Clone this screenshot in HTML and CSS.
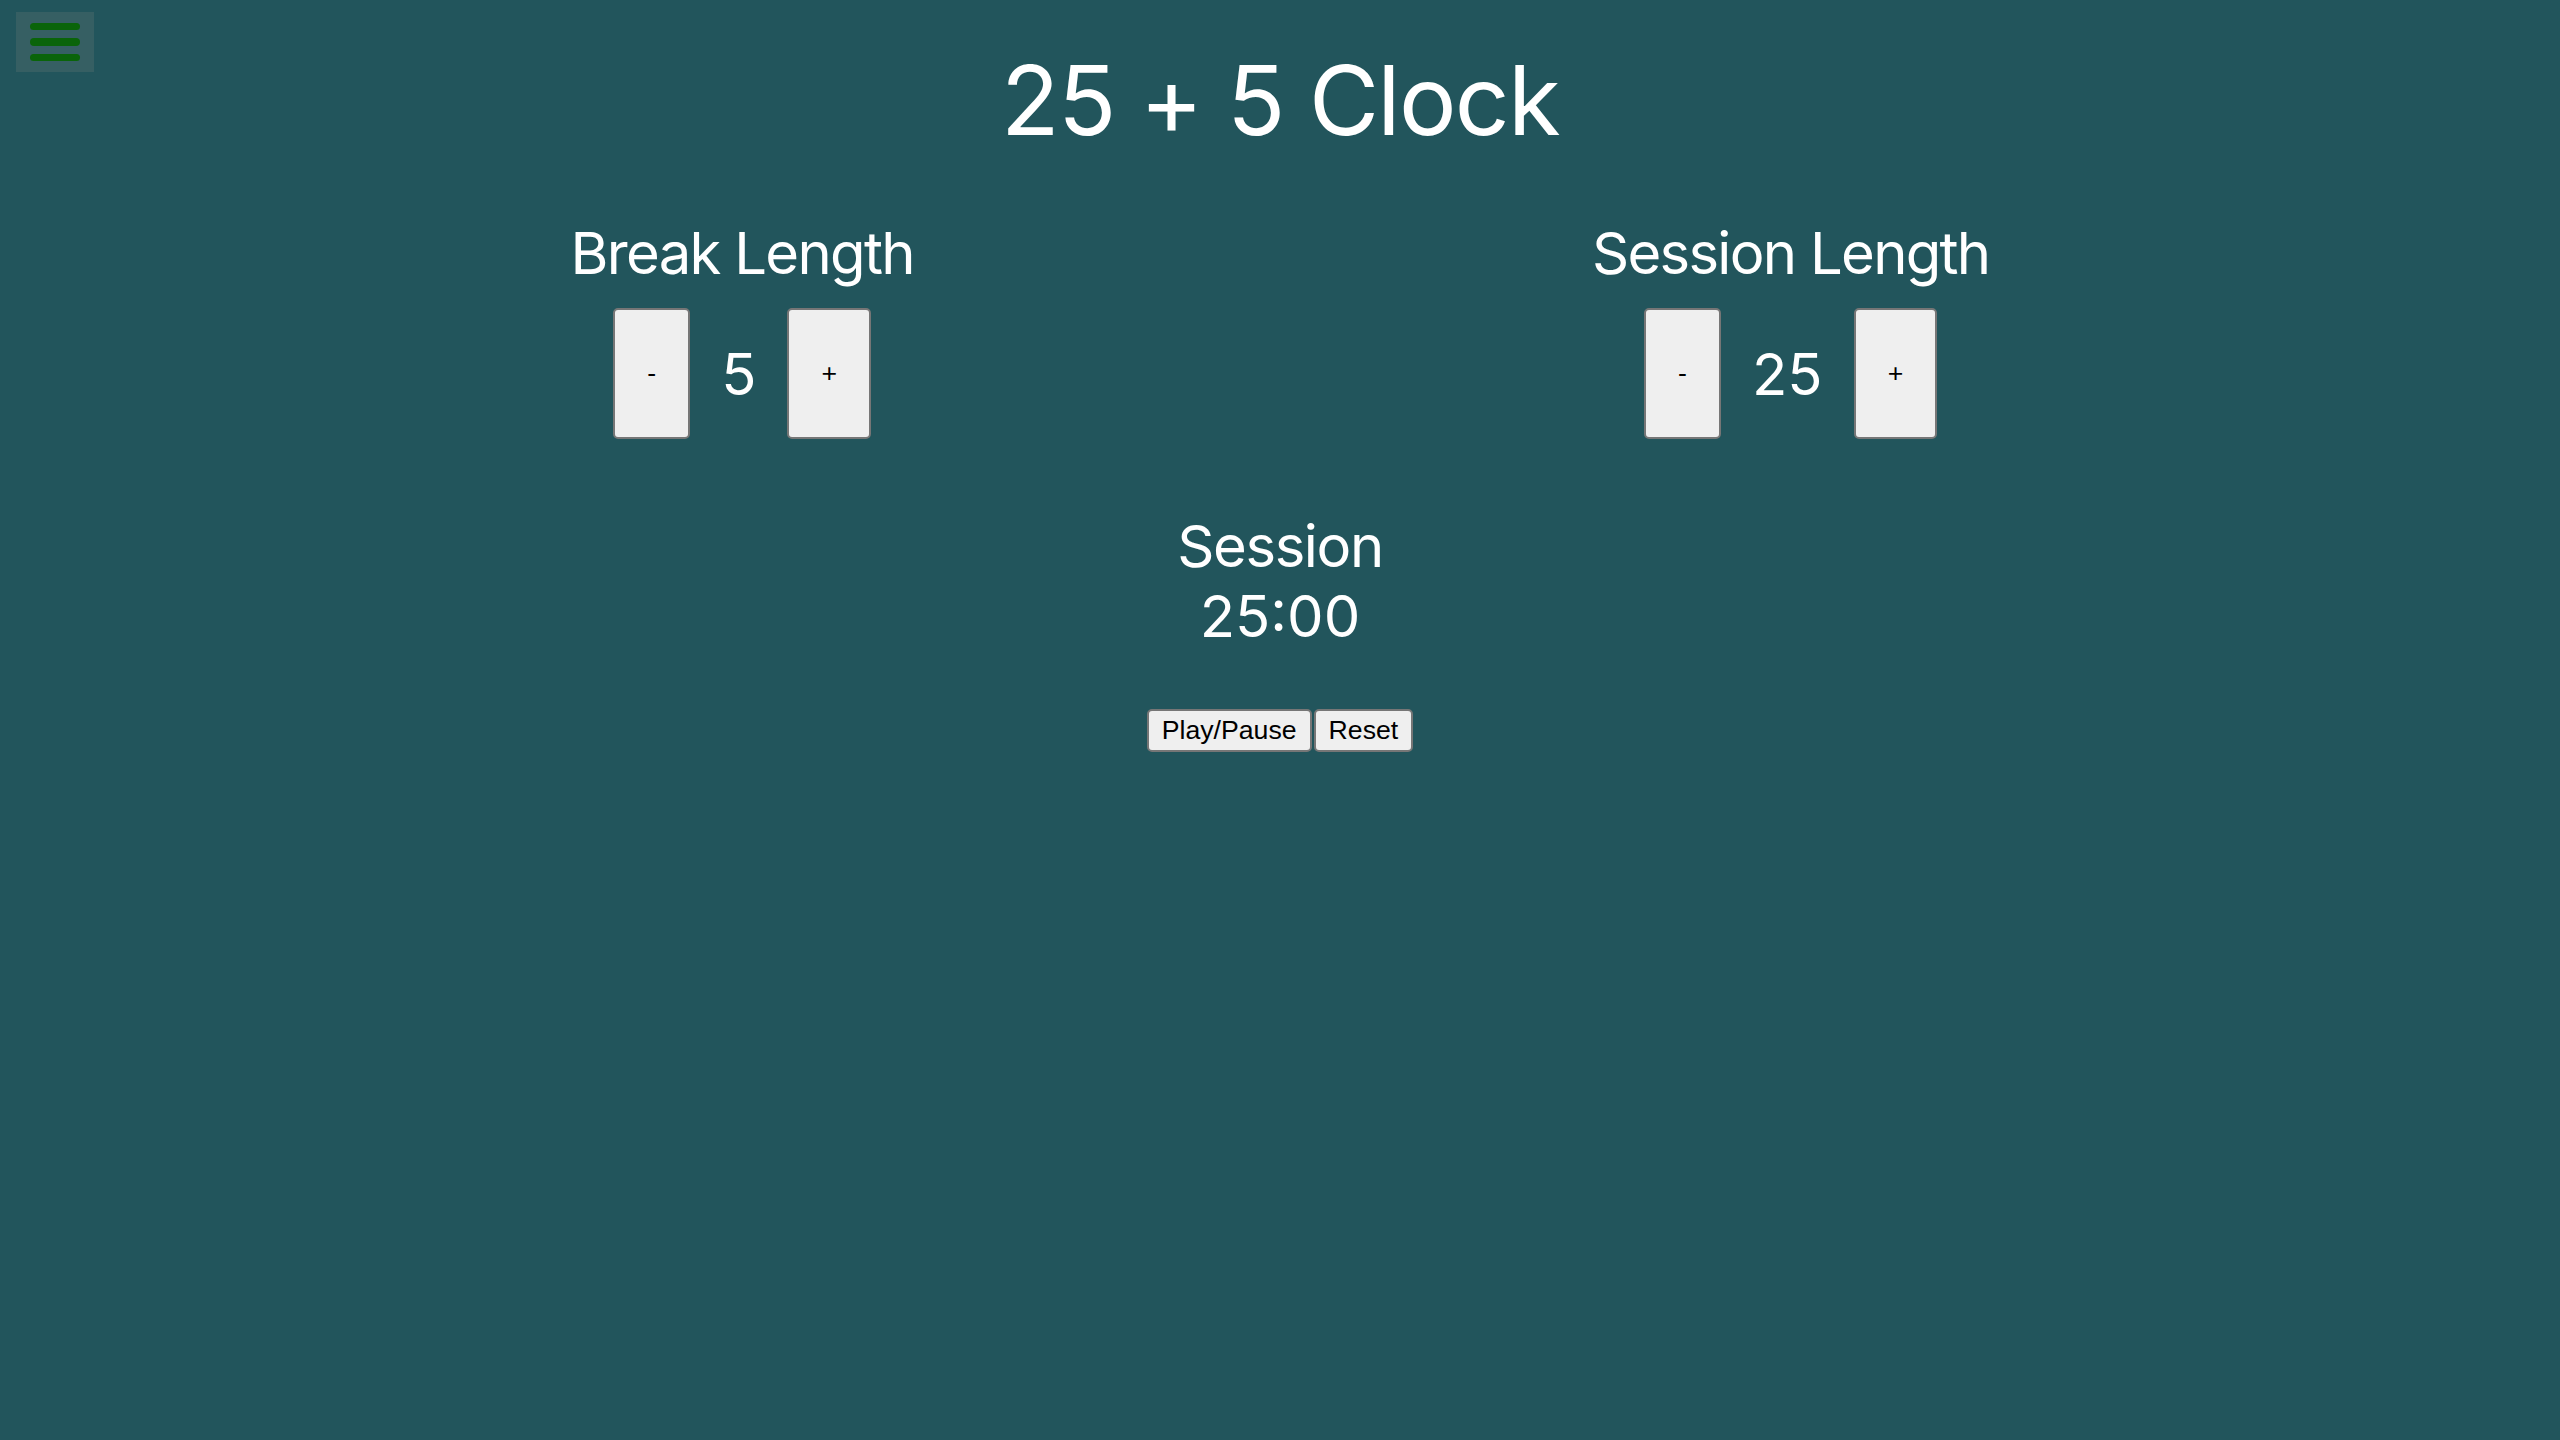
FILE: index.html
```html
<!DOCTYPE html>
<html lang="en">
<head>
<meta charset="utf-8">
<title>25 + 5 Clock</title>
<link rel="stylesheet" href="styles.css">
</head>
<body>
<button class="menu" aria-label="Menu">
  <span class="bar"></span>
  <span class="bar"></span>
  <span class="bar"></span>
</button>
<main class="app">
  <h1 class="title">25 + 5 Clock</h1>
  <section class="settings">
    <div class="setting">
      <h2 class="label">Break Length</h2>
      <div class="stepper">
        <button class="step">-</button>
        <span class="value">5</span>
        <button class="step">+</button>
      </div>
    </div>
    <div class="setting">
      <h2 class="label">Session Length</h2>
      <div class="stepper">
        <button class="step">-</button>
        <span class="value">25</span>
        <button class="step">+</button>
      </div>
    </div>
  </section>
  <section class="timer">
    <div class="timer-label">Session</div>
    <div class="timer-left">25:00</div>
  </section>
  <div class="controls">
    <button class="ctrl">Play/Pause</button>
    <button class="ctrl">Reset</button>
  </div>
</main>
</body>
</html>
```
FILE: styles.css
```css
html, body {
  margin: 0;
  padding: 0;
  height: 100%;
}
body {
  background: #22555c;
  color: #ffffff;
  font-family: Inter, "Noto Sans", sans-serif;
}
.menu {
  position: absolute;
  left: 16px;
  top: 12px;
  width: 78px;
  height: 60px;
  margin: 0;
  padding: 11px 14px;
  border: none;
  background: #365f63;
  display: flex;
  flex-direction: column;
  gap: 8px;
  box-sizing: border-box;
}
.menu .bar {
  display: block;
  width: 50px;
  height: 8px;
  border-radius: 4px;
  background: #0a640a;
}
.app {
  display: flex;
  flex-direction: column;
  align-items: center;
  padding-top: 42px;
}
.title {
  margin: 0;
  font-size: 96px;
  font-weight: 400;
  line-height: normal;
  letter-spacing: -1.7px;
}
.settings {
  width: 2097px;
  display: flex;
  justify-content: space-around;
  margin-top: 60px;
}
.setting {
  display: flex;
  flex-direction: column;
  align-items: center;
}
.label {
  margin: 0;
  font-size: 58px;
  font-weight: 400;
  line-height: normal;
  letter-spacing: -1.7px;
}
.stepper {
  display: flex;
  align-items: center;
  margin-top: 20px;
}
.step {
  font-family: "Liberation Sans", Arial, sans-serif;
  font-size: 26.67px;
  line-height: normal;
  color: #000;
  background: #efefef;
  border: 2px solid #767676;
  border-radius: 5px;
  padding: 48px 32px;
  margin: 0;
}
.value {
  font-size: 58px;
  line-height: normal;
  margin: 0 31px;
}
.timer {
  margin-top: 72px;
  display: flex;
  flex-direction: column;
  align-items: center;
  font-size: 58px;
  line-height: normal;
}
.timer-label {
  letter-spacing: -1.4px;
}
.controls {
  display: flex;
  gap: 2px;
  margin-top: 58px;
}
.ctrl {
  font-family: "Liberation Sans", Arial, sans-serif;
  font-size: 26.67px;
  line-height: normal;
  color: #000;
  background: #efefef;
  border: 2px solid #767676;
  border-radius: 5px;
  padding: 4px 13px;
  margin: 0;
}
```
